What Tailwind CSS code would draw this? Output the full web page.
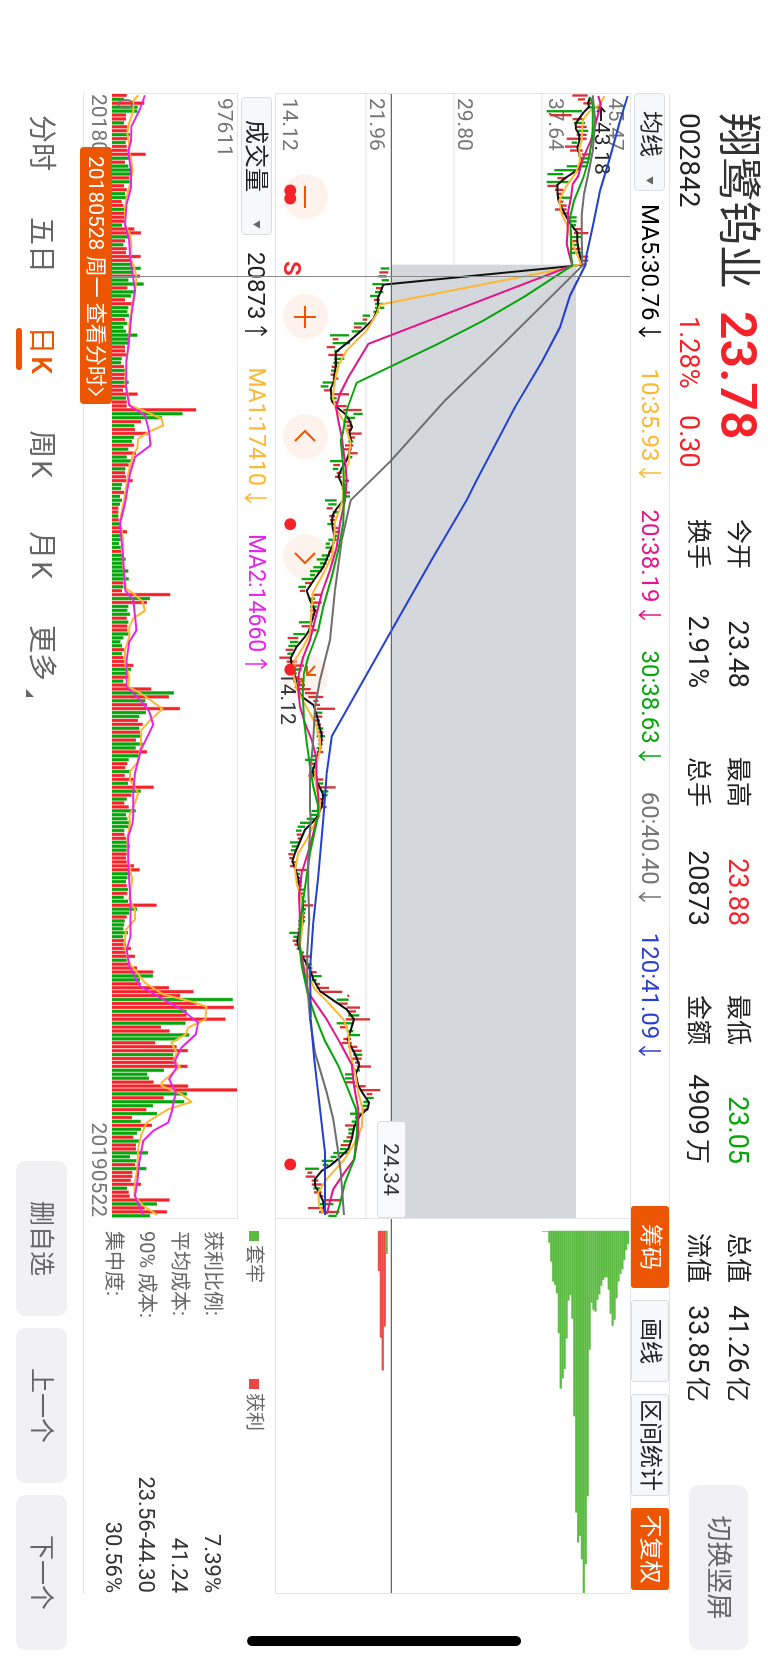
<!DOCTYPE html>
<html lang="zh-CN">
<head>
<meta charset="utf-8">
<meta name="viewport" content="width=device-width, initial-scale=1">
<title>翔鹭钨业 002842</title>
<script src="https://cdn.jsdelivr.net/npm/@tailwindcss/browser@4"></script>
</head>
<body class="bg-white overflow-hidden font-[Roboto,'Noto_Sans_CJK_SC',sans-serif] text-[#222]">
<svg class="hidden">
  <symbol id="down" viewBox="0 0 12 24"><path d="M6 1v21M1.500 17L6 22.500 10.500 17" fill="none" stroke="currentColor" stroke-width="1.500"/></symbol>
  <symbol id="up" viewBox="0 0 12 24"><path d="M6 23V2M1.500 7L6 1.500 10.500 7" fill="none" stroke="currentColor" stroke-width="1.500"/></symbol>
  <symbol id="caret" viewBox="0 0 10 9"><path d="M0.500 0.500h9L5 8.500z" fill="#666"/></symbol>
</svg>

<!-- Landscape screen, turned a quarter clockwise -->
<div class="fixed top-0 left-full w-[100vh] h-[100vw] origin-top-left rotate-90 flex flex-col bg-white">

  <header class="h-[98px] flex-none flex pl-[113px] pr-[13px]">
    <div class="w-[406px] flex-none flex flex-col">
      <div class="flex items-center h-[60px] gap-5">
        <h1 class="text-[44px] leading-[60px] text-[#333] w-[178px] whitespace-nowrap">翔鹭钨业</h1>
        <span class="text-[50px] leading-[60px] font-semibold text-[#f5222a]">23.78</span>
      </div>
      <div class="flex items-center h-[38px] text-[27px] leading-[38px]">
        <span class="w-[203px] text-[28px]">002842</span>
        <span class="text-[#f5222a] w-[99px]">1.28%</span>
        <span class="text-[#f5222a]">0.30</span>
      </div>
    </div>
    <dl class="flex flex-1 gap-[69px] pt-[10px] text-[27px] leading-10 whitespace-nowrap">
      <div class="w-[169px] grid grid-cols-[auto_1fr] grid-rows-[40px_40px]">
        <dt class="text-[25px]">今开</dt><dd class="text-right">23.48</dd>
        <dt class="text-[25px]">换手</dt><dd class="text-right">2.91%</dd>
      </div>
      <div class="w-[169px] grid grid-cols-[auto_1fr] grid-rows-[40px_40px]">
        <dt class="text-[25px]">最高</dt><dd class="text-right text-[#f5222a]">23.88</dd>
        <dt class="text-[25px]">总手</dt><dd class="text-right">20873</dd>
      </div>
      <div class="w-[169px] grid grid-cols-[auto_1fr] grid-rows-[40px_40px]">
        <dt class="text-[25px]">最低</dt><dd class="text-right text-[#06a50a]">23.05</dd>
        <dt class="text-[25px]">金额</dt><dd class="text-right">4909<span class="text-[25px] ml-1">万</span></dd>
      </div>
      <div class="w-[169px] grid grid-cols-[auto_1fr] grid-rows-[40px_40px]">
        <dt class="text-[25px]">总值</dt><dd class="text-right">41.26<span class="text-[25px] ml-1">亿</span></dd>
        <dt class="text-[25px]">流值</dt><dd class="text-right">33.85<span class="text-[25px] ml-1">亿</span></dd>
      </div>
    </dl>
    <button class="mt-5 w-[165px] h-[59px] rounded-[10px] bg-[#f1f1f3] text-[#666] text-[26px]">切换竖屏</button>
  </header>

  <main class="flex-1 min-h-0 flex flex-col pl-[93px] pr-[69px]">
    <div class="h-10 flex-none flex items-center border-y border-[#e3e5e8] pr-1">
      <label class="relative block w-[98px] h-[31px]">
        <select aria-label="均线" class="appearance-none w-full h-full rounded border border-[#d9dde2] bg-[#f7f8fa] pl-[17px] text-[23px] leading-[28px]"><option>均线</option></select>
        <svg class="absolute right-1.5 top-[11px] w-[9px] h-[9px] pointer-events-none"><use href="#caret"/></svg>
      </label>
      <div class="flex-1 flex items-center gap-[30px] pl-[13px] text-[24px] leading-8 whitespace-nowrap">
        <span class="flex items-center gap-1.5 text-black">MA5:30.76<svg class="w-3 h-6"><use href="#down"/></svg></span>
        <span class="flex items-center gap-1.5 text-[#fdb732]">10:35.93<svg class="w-3 h-6"><use href="#down"/></svg></span>
        <span class="flex items-center gap-1.5 text-[#e3158b]">20:38.19<svg class="w-3 h-6"><use href="#down"/></svg></span>
        <span class="flex items-center gap-1.5 text-[#06a50a]">30:38.63<svg class="w-3 h-6"><use href="#down"/></svg></span>
        <span class="flex items-center gap-1.5 text-[#757575]">60:40.40<svg class="w-3 h-6"><use href="#down"/></svg></span>
        <span class="flex items-center gap-1.5 text-[#2a40cc]">120:41.09<svg class="w-3 h-6"><use href="#down"/></svg></span>
      </div>
      <div class="flex gap-3 text-[23px] whitespace-nowrap">
        <button class="w-[82px] h-[38px] rounded-[3px] bg-[#ec5502] text-white">筹码</button>
        <button class="w-[82px] h-[38px] rounded-[3px] border border-[#d9dde2] bg-[#f7f8fa]">画线</button>
        <button class="w-[102px] h-[38px] rounded-[3px] border border-[#d9dde2] bg-[#f7f8fa]">区间统计</button>
        <button class="w-[82px] h-[38px] rounded-[3px] bg-[#ec5502] text-white">不复权</button>
      </div>
    </div>

    <div class="flex-1 min-h-0 grid grid-cols-[1126fr_375fr]">
      <!-- Price and volume -->
      <section class="relative flex flex-col min-w-0">
        <div class="relative flex-1 min-h-0 border-l border-r border-[#e3e5e8] text-[21px] leading-[21px] text-[#757575]">
          <svg id="grid" class="absolute inset-0 w-full h-full" viewBox="0 0 3378 1062" preserveAspectRatio="none">
            <path d="M0 264H3378M0 528H3378M0 792H3378" stroke="#ebecef" stroke-width="4"/>
            <rect x="513" y="162" width="2865" height="554" fill="#d4d7dc"/>
          </svg>
          <div class="absolute inset-y-0 left-1 flex flex-col">
            <span class="h-[64px] pt-1">45.47</span><span class="h-[88px]">37.64</span><span class="h-[88px] pt-[3px]">29.80</span><span class="h-[88px] pt-[3px]">21.96</span><span class="pt-0.5">14.12</span>
          </div>
          <div class="absolute left-[80px] bottom-[7px] flex gap-[75px] text-[#ec5502]">
            <button aria-label="缩小" class="size-[45px] rounded-full bg-[#fdf2ec] grid place-items-center"><svg class="size-6" viewBox="0 0 24 24"><path d="M1 12h22" stroke="currentColor" stroke-width="2"/></svg></button>
            <button aria-label="放大" class="size-[45px] rounded-full bg-[#fdf2ec] grid place-items-center"><svg class="size-6" viewBox="0 0 24 24"><path d="M1 12h22M12 1v22" stroke="currentColor" stroke-width="2"/></svg></button>
            <button aria-label="左移" class="size-[45px] rounded-full bg-[#fdf2ec] grid place-items-center"><svg class="size-6" viewBox="0 0 24 24"><path d="M16 2L6 12l10 10" fill="none" stroke="currentColor" stroke-width="2"/></svg></button>
            <button aria-label="右移" class="size-[45px] rounded-full bg-[#fdf2ec] grid place-items-center"><svg class="size-6" viewBox="0 0 24 24"><path d="M8 2l10 10L8 22" fill="none" stroke="currentColor" stroke-width="2"/></svg></button>
            <button aria-label="收起" class="size-[45px] rounded-full bg-[#fdf2ec] grid place-items-center"><svg class="size-6" viewBox="0 0 24 24"><path d="M1 2l9 8M10 1v9H1M23 22l-9-8M14 23v-9h9" fill="none" stroke="currentColor" stroke-width="2"/></svg></button>
          </div>
          <span class="absolute left-[578px] bottom-px text-[#333]">14.12</span>
          <span class="absolute left-[12px] top-[18px] flex items-center text-[#222]"><svg class="w-4 h-3" viewBox="0 0 16 12"><path d="M15 6H2M6 2L1.500 6 6 10" fill="none" stroke="currentColor" stroke-width="2"/></svg>43.18</span>
          <svg id="price" class="absolute inset-0 w-full h-full pointer-events-none" viewBox="0 0 3378 1062" preserveAspectRatio="none"></svg>
          <span class="absolute left-[167px] bottom-[5px] text-[24px] font-semibold text-[#f5222a]">S</span>
          <span class="absolute right-0 top-[224px] w-[97px] h-[29px] rounded-[3px] border border-[#d9dde2] bg-[#f7f9fb] text-center leading-[28px] text-[#333]">24.34</span>
        </div>

        <div class="h-[38px] flex-none flex items-center pl-1 border-t border-[#e3e5e8]">
          <label class="relative block w-[138px] h-[31px]">
            <select aria-label="成交量" class="appearance-none w-full h-full rounded border border-[#d9dde2] bg-[#f7f8fa] pl-[22px] text-[24px] leading-[28px]"><option>成交量</option></select>
            <svg class="absolute right-1.5 top-[11px] w-[9px] h-[9px] pointer-events-none"><use href="#caret"/></svg>
          </label>
          <div class="flex items-center gap-[30px] pl-[17px] text-[24px] leading-8 whitespace-nowrap">
            <span class="flex items-center gap-1.5">20873<svg class="w-3 h-6"><use href="#up"/></svg></span>
            <span class="flex items-center gap-1.5 text-[23px] text-[#fdb732]">MA1:17410<svg class="w-3 h-6"><use href="#down"/></svg></span>
            <span class="flex items-center gap-1.5 text-[23px] text-[#e425ea]">MA2:14660<svg class="w-3 h-6"><use href="#up"/></svg></span>
          </div>
        </div>

        <div class="relative h-[126px] flex-none border-t border-r border-l border-[#e3e5e8] text-[21px] leading-[21px] text-[#757575]">
          <svg id="volume" class="absolute inset-0 w-full h-full" viewBox="0 0 3378 376" preserveAspectRatio="none"></svg>
          <div class="absolute inset-y-0 left-1 flex flex-col justify-between pt-[2px] pb-[2px]"><span>97611</span><span>0</span></div>
        </div>
        <div class="absolute top-0 bottom-[29px] left-[183px] w-px bg-[#888]"></div>

        <div class="relative h-[29px] flex-none flex items-center justify-between border-b border-[#e3e5e8] text-[21px] leading-[26px] pb-0.5 text-[#757575] pl-px pr-0.5">
          <span>20180522</span><span>20190522</span>
          <a href="#" class="absolute left-[54px] top-0 h-8 w-[257px] flex items-center pl-[9px] pr-2 rounded-sm bg-[#ec5502] text-white whitespace-nowrap justify-between">20180528 周一 查看分时<svg class="w-[11px] h-5" viewBox="0 0 11 20"><path d="M1.500 1L9.500 10 1.500 19" fill="none" stroke="currentColor" stroke-width="2"/></svg></a>
        </div>
      </section>

      <!-- Chip distribution -->
      <section class="flex flex-col min-w-0">
        <div class="relative flex-1 min-h-0 border-r border-[#e3e5e8]">
          <svg id="chips" class="absolute inset-0 w-full h-full" viewBox="0 0 1125 1062" preserveAspectRatio="none"></svg>
        </div>
        <div class="h-[193px] flex-none border-y border-[#e3e5e8] pl-[12px] pr-px text-[#666]">
          <div class="h-[42px] flex items-center text-[19px]">
            <span class="w-[148px] flex items-center gap-1"><i class="size-[10px] bg-[#5cba43]"></i>套牢</span>
            <span class="flex items-center gap-1"><i class="size-[10px] bg-[#ec4747]"></i>获利</span>
          </div>
          <dl class="grid grid-cols-[1fr_auto] pt-1 text-[20px] leading-[33px] whitespace-nowrap">
            <dt>获利比例:</dt><dd class="text-[22px] text-right text-[#333]">7.39%</dd>
            <dt>平均成本:</dt><dd class="text-[22px] text-right text-[#333]">41.24</dd>
            <dt>90% 成本:</dt><dd class="text-[22px] text-right text-[#333]">23.56-44.30</dd>
            <dt>集中度:</dt><dd class="text-[22px] text-right text-[#333]">30.56%</dd>
          </dl>
        </div>
      </section>
    </div>
  </main>

  <footer class="h-[83px] flex-none flex items-center pl-[92px] pr-[13px]">
    <nav class="flex flex-1 text-[28px] leading-[34px] text-[#666] whitespace-nowrap">
      <button class="w-[102px]">分时</button>
      <button class="w-[102px]">五日</button>
      <button class="w-[108px] text-[#ec5502]"><span class="relative">日<b class="font-medium ml-0.5">K</b><i class="absolute left-0.5 right-1 top-[36px] h-1.5 rounded-full bg-[#ec5502]"></i></span></button>
      <button class="w-[100px]">周<span class="ml-0.5">K</span></button>
      <button class="w-[102px]">月<span class="ml-0.5">K</span></button>
      <button class="w-[102px] flex items-end justify-center pl-2">更多<svg class="w-2 h-2 ml-2 mb-0.5" viewBox="0 0 8 8"><path d="M8 0v8H0z" fill="#666"/></svg></button>
    </nav>
    <div class="flex gap-3 text-[25px] text-[#666]">
      <button class="w-[155px] h-[51px] rounded-[9px] bg-[#f1f1f3]">删自选</button>
      <button class="w-[155px] h-[51px] rounded-[9px] bg-[#f1f1f3]">上一个</button>
      <button class="w-[155px] h-[51px] rounded-[9px] bg-[#f1f1f3]">下一个</button>
    </div>
  </footer>

  <div class="absolute right-[17px] inset-y-0 my-auto w-[10px] h-[274px] rounded-full bg-black"></div>
</div>

<script>
// Series are [value, time] pairs in thirds of a pixel; each block is shifted on to the common axes.
const PITCH = 11.815;
const shift = (dv, dt, list) => { const out = []; for (let i = 0; i < list.length; i += 2) out.push([list[i + 1] + dt, list[i] + dv]); return out; };
const A = l => shift(282, -99, l), B = l => shift(-828, -99, l), C = l => shift(-828, 1041, l), D = l => shift(-828, 2181, l);
const line = (pts, h, color) => `<polyline points="${pts.map(p => p[0] + ',' + (h - p[1])).join(' ')}" fill="none" stroke="${color}" stroke-width="6" stroke-linejoin="round"/>`;

const ma5 = [...A([660,108,655,125,657,138,640,155,628,172,617,188,618,205,628,222,628,240,622,260,628,280,632,300,625,325,600,342,585,352,562,372,563,400,565,418,575,440,590,470,603,492,622,515,622,540,626,570,636,612,606,616]),
 ...B([1150,672,1143,690,1133,715,1135,740,1120,775,1090,805,1050,840,1007,875,1008,915,1003,945,1003,960,992,985,995,1020,1010,1040,1035,1060,1048,1080,1056,1100,1048,1115,1053,1140,1050,1170]),
 ...C([1040,60,1025,85,1015,108,1025,130,1035,155,1030,180,1010,205,998,225,996,245,998,265,1004,290,1000,310,985,345,970,380,945,415,920,452,930,480,945,512,938,535,928,570,915,590,890,620,872,655,876,685,885,710,892,745,905,770,940,795,950,825,957,855,965,885,963,910,957,935,948,965,937,995,945,1015,960,1045,970,1065,965,1100,955,1125]),
 ...D([945,0,915,30,900,65,885,100,877,125,885,145,893,170,898,195,898,220,906,240,910,270,908,310,897,340,892,365,900,395,912,420,930,450,940,480,960,515,1000,543,1040,570,1062,600,1053,630,1043,660,1055,685,1068,710,1078,740,1067,765,1075,800,1090,825,1107,850,1103,868,1075,895,1062,925,1055,960,1045,990,1020,1015,990,1040,965,1055,945,1080,945,1100,960,1125,970,1150,975,1185])];
const ma10 = [...A([703,105,690,130,660,150,640,175,637,200,635,240,628,262,630,300,618,335,590,375,568,418,575,460,590,490,602,530,612,560,625,590,633,610,600,620]),
 ...B([1140,732,1130,760,1100,810,1040,870,1015,915,1005,960,998,1010,1008,1045,1030,1080,1040,1110,1052,1145,1048,1180]),
 ...C([1048,60,1035,95,1030,130,1030,170,1018,210,1005,245,1003,290,995,350,970,400,940,455,935,500,932,545,930,580,910,620,885,660,880,700,890,745,910,785,930,820,948,855,960,900,960,930,950,970,945,1010,950,1050,960,1090,958,1130]),
 ...D([950,0,920,60,895,100,885,150,890,190,903,235,908,280,905,340,900,380,908,430,925,470,945,510,985,550,1030,600,1045,640,1050,700,1065,760,1075,820,1088,870,1085,925,1062,975,1030,1025,980,1080,955,1120,958,1160,970,1185])];
const ma20 = [...A([685,105,692,130,682,170,662,240,640,290,625,345,608,370,603,410,595,450,593,500,590,550,600,590,607,614]),
 ...B([1105,850,1045,950,1020,1000,1008,1040,1015,1080,1025,1130,1033,1190]),
 ...C([1035,60,1040,120,1035,180,1020,250,1010,320,990,390,965,460,945,540,930,600,910,650,897,700,895,750,900,800,915,850,935,900,948,950,950,1010,955,1070,955,1130]),
 ...D([950,0,930,80,905,160,897,230,900,300,898,370,908,430,925,520,980,600,1020,670,1055,735,1062,800,1075,870,1075,950,1063,1020,1030,1065,1000,1110,980,1185])];
const ma30 = [...A([660,108,668,130,668,200,666,240,655,300,640,350,612,420,600,470,603,520,603,580,607,614,560,645,460,710,340,780,200,852,64,917]),
 ...B([1070,967,1040,1050,1028,1120]),
 ...C([1022,0,1030,80,1032,150,1030,250,1015,330,995,410,970,500,955,570,925,650,912,700,908,760,912,840,920,910,930,980,940,1040,955,1100,955,1130]),
 ...D([952,0,930,100,910,240,903,300,898,370,905,440,925,530,945,590,975,665,1015,740,1040,800,1068,870,1072,930,1063,1020,1035,1090,1020,1155,1010,1188])];
const ma60 = [...A([668,103,676,180,668,270,655,340,642,400,635,460,635,540,637,605,638,614,400,850,225,1020,64,1200]),
 ...C([1052,180,1025,300,1005,450,990,600,960,720,945,800,940,900,930,1000,930,1110]),
 ...D([932,0,925,120,925,200,928,300,922,400,922,500,930,600,945,700,980,820,1000,900,1015,1000,1022,1060,1032,1188])];
const ma120 = [...A([773,105,750,180,720,290,690,390,670,490,650,580,645,615,600,705,570,800,515,905,435,1040,320,1260,290,1320,190,1490,64,1712]),
 ...C([995,890,980,1000]),
 ...D([970,0,955,170,940,310,930,450,932,600,943,720,960,870,975,1000,975,1188])];

const candles = `r1717-1763 r1734-1755 r1750-1778 g1765-1800 g1640-1746 r1650-1715 r1718-1750 g1722-1755 r1728-1760 g1732-1765 r1730-1760 r1700-1760 g1715-1732 r1695-1735 r1710-1748 r1745-1772 g1740-1770 g1738-1765 g1700-1762 g1663-1730 g1642-1690 r1672-1700 g1640-1710 r1642-1675 r1665-1690 r1670-1685 g1675-1710 r1675-1690 r1680-1700 r1665-1700 r1685-1708 g1700-1730 g1705-1730 g1710-1728 r1720-1745 r1722-1765 g1710-1745 r1715-1735 g1715-1732 r1715-1742 g1716-1745 r1735-1765 r1745-1765 r1740-1760
g1142-1168 r1138-1165 r1135-1160 g1145-1167 g1117-1150 r1128-1148 g1125-1150 g1110-1135 r1122-1140 g1125-1150 g1125-1153 g1120-1137 g1088-1110 r1088-1102 g1062-1100 r1062-1085 g1055-1080 g990-1047 r998-1015 g998-1050 r980-1005 g1003-1018 r985-1032 g1003-1033 g1000-1018 r995-1015 g993-1015 r992-1005 r998-1015 g968-1000 g962-985 r972-995 r998-1047 g990-1010 r995-1015 r1005-1040 r1030-1085 g1060-1088 g1040-1065 r1030-1055 r1040-1057 r1040-1055 r1048-1085 r1045-1065 g1045-1060 r1035-1060 r1030-1055 r1050-1073
g1040-1057 g990-1030 r1000-1020 g998-1015 r1010-1025 r1005-1025 r1030-1047 g1030-1040 r1025-1040 r1032-1050 g1035-1050 g975-1010 g985-1010 r980-998 g998-1015 r988-1005 r990-1005 g982-1005 r998-1015 r1003-1020 g1000-1012 g985-1010 g977-990 g977-1000 r985-1000 g965-990 g950-985 g960-980 g940-970 g930-965 g930-945 g905-940 r915-935 g895-918 r900-915 r935-965 g930-945 r935-965 g930-950 r930-950 r935-945 g930-942 g897-930 r905-940 r925-950 g880-915 r863-895 g870-895 g865-890 r857-880 g862-880 r838-870 r860-890 r875-912 g880-905 g875-890 r878-895 g880-895 r885-915 r895-932 r915-950 r925-970 r940-955 r945-960 r950-1005 g950-967 r945-967 r945-960 r950-963 g950-970 r950-970 g950-975 r955-970 g955-968 g950-965 r950-970 g935-955 g915-945 r935-950 g935-950 r930-945 r925-945 r945-970 g945-970 r955-1007 g965-985 g965-983 r960-970 r960-972 r962-980 g935-960 g932-955 g920-945
g900-930 g893-915 g888-905 r890-905 r893-905 g870-900 g875-895 g872-890 r865-880 r868-880 r875-890 r870-890 r885-920 g885-900 g890-905 r890-905 r890-905 g895-912 r895-910 g898-910 g903-918 r905-940 g905-918 g900-915 r903-915 g895-915 g895-910 g893-905 g868-900 g880-895 r878-893 r883-898 r890-903 g900-912 r905-930 r905-920 g915-935 r920-937 r930-950 g935-965 g935-950 r945-960 r950-987 r960-1027 r1042-1048 g1010-1046 r1015-1043 r1040-1080 r1045-1068 g1045-1078 r1037-1110 g1010-1060 r1020-1043 g1040-1060 g1050-1080 r1030-1053 r1025-1055 r1045-1072 r1055-1085 g1060-1087 r1055-1085 r1065-1080 r1070-1113 g1060-1080 g1035-1062 g1035-1060 r1035-1065 r1065-1097 r1080-1141 r1100-1117 g1100-1121 g1090-1105 g1085-1103 r1085-1105 g1050-1085 g1065-1080 g1055-1072 r1035-1065 g1045-1065 g1045-1060 r1040-1057 g1030-1055 r1022-1050 g1020-1045 g1000-1045 g992-1010 g965-1000 g968-985 g915-957 r922-937 r917-945 r935-955 r935-965 g940-960 r942-965 r955-970 r970-1025 g960-1000 r924-975 r957-1018 g985-1010`.split(/\s+/);
let s = candles.map((c, i) => {
  const [lo, hi] = c.slice(1).split('-').map(Number);
  return `<rect x="${(4 + i * PITCH - 3).toFixed(1)}" y="${1062 - (hi - 828)}" width="7" height="${hi - lo}" fill="${c[0] === 'r' ? '#d63338' : '#0aa30d'}"/>`;
}).join('');
s += line(ma5, 1062, '#111') + line(ma10, 1062, '#fdb732') + line(ma20, 1062, '#e3158b') + line(ma30, 1062, '#06a50a') + line(ma60, 1062, '#6e6e6e') + line(ma120, 1062, '#2340cf');
s += '<path d="M0 716H3378" stroke="#666" stroke-width="4"/>';
for (const t of [290, 314, 1293, 1730, 3217]) s += `<circle cx="${t}" cy="1019" r="18" fill="#f5222a"/>`;
document.getElementById('price').innerHTML = s;

const bars = `r380 g372 r433 g413 g412 r378 r378 g372 r382 r382 g390 r382 g377 r380 r382 r437 g392 r375 g385 g392 g393 r388 g393 r372 r380 g375 g378 r365 r370 g372 r372 r375 r378 g366 r403 r423 g390 r375 g370 r380 r378 r422 r390 g395 g422 g400 r420 g385 g431 r382 g402 g393 r375 r400 g385 g382 g387 r375 g382 g370 g378 g412 g385 g387 r375 r375 r382 g365 g363 r372 g377 r377 r374 g386 r378 r369 r413 g378 r380 r380 r589 g548 g486 r423 g403 r405 r443 g402
g396 r402 g385 r408 g380 g393 r386 g376 r375 r378 r398 g366 g363 r372 g360 g366 g360 r355 r355 g355 r356 g362 r366 r381 g362 g362 g357 g362 r363 g366 g377 g369 g369 g385 g375 g386 r370 g370 r366 r511 g450 r441 g385 g382 g390 r380 g385 r382 r382 g386 g370 g361 g366 r372 g366 r370 r380 r400 g393 g385 r390 g370 r378 r454 g522 r507 g436 r441 r540 g438 g418 r414 r428 g418 r420 g422 r408 g428 g407 r441 g417 g386 r382 r376 g390 r374 r400 g384 r461 g422 r394 g380 r373 r386 g407 g378 g382
g387 g386 g373 r373 r378 g385 g389 g380 r380 r378 r380 r402 r419 g392 g382 g378 r380 g384 r382 g371 g384 r470 g411 g387 r380 g374 g372 g370 g384 g369 r372 r378 r393 r384 r405 g380 r393 r411 r460 g459 g420 r422 r507 r581 r541 g699 r590 r702 g560 r560 r677 g557 r483 r509 g568 g535 r466 r530 r564 g520 r525 r530 r563 g492 g442 g447 r461 r565 r712 g561 r491 g553 g459 r439 g471 r396 g422 r456 g423 g411 r400 g417 r408 r408 g444 g390 g409 r405 g439 r397 r397 r392 r423 g381 r386 r389 r509 g471 r434 r501 g450`.split(/\s+/);
const VA = l => shift(-336, -99, l), VB = l => shift(-336, 1041, l), VC = l => shift(-336, 2181, l);
const v1 = [...VA([415,103,400,120,400,150,388,185,382,215,388,250,388,275,395,300,398,330,390,370,382,400,375,440,375,490,390,520,395,555,390,590,403,620,410,650,405,690,395,740,388,790,388,850,378,900,376,970,385,1010,390,1035,430,1050,485,1075,490,1095,445,1115,415,1135,412,1165]),
 ...VB([400,40,385,100,372,180,360,240,370,300,370,380,378,445,400,460,428,485,435,512,400,535,388,560,388,590,375,630,375,670,388,710,385,740,430,765,488,807,452,840,425,870,422,920,415,965,390,995,390,1020,415,1060,405,1090,388,1130]),
 ...VC([390,10,382,60,385,120,397,180,388,240,405,270,405,300,378,330,373,380,388,430,435,490,490,525,580,548,620,562,617,600,565,625,558,645,515,670,530,700,522,725,540,742,485,790,485,800,545,825,575,848,505,870,440,910,425,945,415,985,412,1050,405,1090,403,1130,430,1160,472,1188])];
const v2 = [...VA([435,103,420,145,395,195,393,240,385,270,393,330,393,380,380,430,375,490,388,540,390,590,398,640,405,690,395,760,388,830,380,900,378,980,388,1035,435,1065,447,1110]),
 ...VB([452,15,405,50,390,100,375,190,360,250,368,340,376,450,400,480,410,570,388,605,380,660,380,740,420,780,448,815,460,855,438,900,423,930,405,1000,400,1060,400,1130]),
 ...VC([398,10,385,50,385,130,392,250,392,350,380,390,388,440,420,500,490,540,545,570,595,610,588,645,545,685,525,725,530,745,508,780,528,820,515,880,505,910,460,935,430,965,418,1030,412,1090,405,1130,430,1188])];
document.getElementById('volume').innerHTML = bars.map((b, i) => {
  const h = b.slice(1) - 336, x = (4 + i * PITCH).toFixed(1), y = 376 - h;
  return `<rect x="${x - 5.5}" y="${y}" width="11" height="${h}" fill="${b[0] === 'r' ? '#fa9a9a' : '#7fce80'}"/><rect x="${x - 4}" y="${y}" width="8" height="${h}" fill="${b[0] === 'r' ? '#f5222a' : '#06a50a'}"/>`;
}).join('') + line(v1, 376, '#fdb732') + line(v2, 376, '#e425ea');

const green = [128,185,245,255,280,400,567,536,508,416,302,285,357,650,940,1030,1010,1080,1182,1095,890,450,308,330,335,300,283,258,240,232,232,270,342,378,360,295,245,222,208,180,150,132];
const step = 242 / green.length;
const chip = (v, w, end, fill, edge) => `<rect x="36" y="${1062 - v - w}" width="${end - 93}" height="${w}" fill="${fill}" stroke="${edge}" stroke-width="1"/>`;
document.getElementById('chips').innerHTML =
  green.map((e, i) => chip(817 + i * step, step, e, '#5aba41', '#6cc654')).join('') + chip(797, 20, 95, '#5aba41', 'none') +
  [213, 414, 512, 380].map((e, i) => chip(306 + i * 5.8, 5.8, e, '#ec4747', '#f05c5c')).join('') + chip(329, 5.8, 162, '#5aba41', '#6cc654') +
  '<path d="M0 716H1125" stroke="#666" stroke-width="4"/>';
</script>
</body>
</html>
